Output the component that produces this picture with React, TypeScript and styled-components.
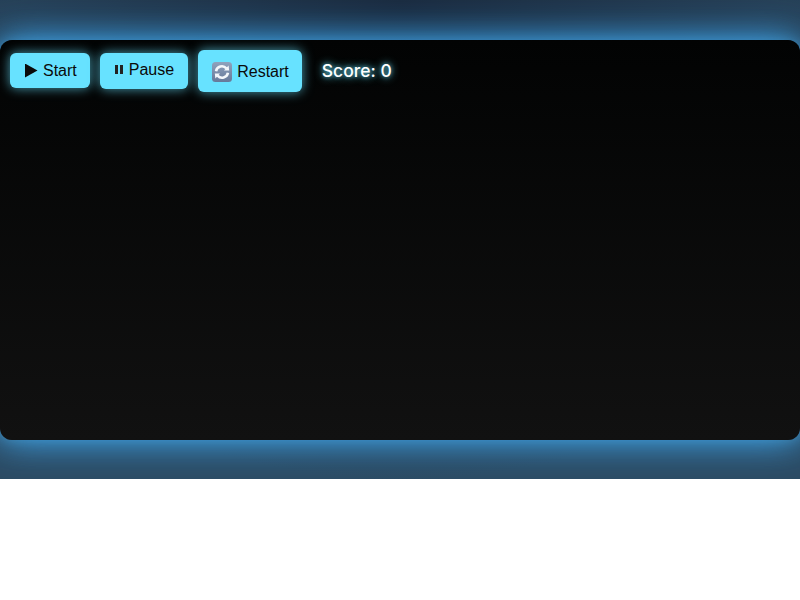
import styled, { createGlobalStyle } from "styled-components";

const GlobalStyle = createGlobalStyle`
  html, body {
    margin: 0;
    padding: 0;
    background: #fff;
  }
`;

const Page = styled.div`
  height: 479px;
  box-sizing: border-box;
  padding-top: 40px;
  overflow: hidden;
  background: radial-gradient(ellipse 560px 480px at 50% 0, #1a2a3e 0%, #2c4a62 100%);
`;

const Board = styled.main`
  height: 400px;
  border-radius: 12px;
  background: linear-gradient(180deg, #020303 0%, #111 100%);
  box-shadow: 0 0 40px #3aa2ec, 0 0 30px rgba(90, 190, 240, 0.3), 0 0 12px rgba(90, 190, 240, 0.3);
`;

const Toolbar = styled.div`
  display: flex;
  align-items: center;
  gap: 10px;
  padding: 10px 0 0 10px;
`;

const Button = styled.button<{ $height: number; $lift?: number; $endPad?: number }>`
  display: inline-flex;
  align-items: center;
  gap: 5px;
  box-sizing: border-box;
  height: ${({ $height }) => $height}px;
  margin-bottom: ${({ $height }) => (36 - $height > 0 ? 36 - $height : 0)}px;
  padding: ${({ $lift = 0 }) => ($lift < 0 ? -$lift : 0)}px ${({ $endPad = 14 }) => $endPad}px
    ${({ $lift = 0 }) => ($lift > 0 ? $lift : 0)}px 14px;
  border: none;
  border-radius: 6px;
  background: #67e2ff;
  color: #0a0a0a;
  font-family: "Liberation Sans", Arial, sans-serif;
  font-size: 16px;
  box-shadow: 0 0 12px rgba(103, 226, 255, 0.7);
`;

const Score = styled.span`
  margin: 0 0 2px 10px;
  color: #fff;
  font-family: Inter, "Liberation Sans", sans-serif;
  font-size: 17.5px;
  font-weight: 500;
  text-shadow: 0 0 8px #67e2ff, 0 0 4px rgba(103, 226, 255, 0.6);
`;

const PlayIcon = () => (
  <svg width="14" height="14" viewBox="0 1 14 14">
    <path d="M1 0.5 L13.5 7.5 L1 14.5 Z" fill="#0a0a0a" />
  </svg>
);

const PauseIcon = () => (
  <svg width="10" height="9" viewBox="0 0 10 9">
    <rect x="1" y="0" width="3" height="9" fill="#222" />
    <rect x="6" y="0" width="3" height="9" fill="#222" />
  </svg>
);

const RestartIcon = () => (
  <svg width="20" height="20" viewBox="0 0 20 20">
    <defs>
      <linearGradient id="tile" x1="0" y1="0" x2="0" y2="1">
        <stop offset="0" stopColor="#8fa2bd" />
        <stop offset="1" stopColor="#66799a" />
      </linearGradient>
    </defs>
    <rect width="20" height="20" rx="3.5" fill="url(#tile)" />
    <path d="M4 9.2 A6 6 0 0 1 14.4 6.4" fill="none" stroke="#f4f7fb" strokeWidth="2.6" />
    <path d="M12 8.4 L17.2 8.4 L16.6 3.4 Z" fill="#f4f7fb" />
    <path d="M16 10.8 A6 6 0 0 1 5.6 13.6" fill="none" stroke="#f4f7fb" strokeWidth="2.6" />
    <path d="M8 11.6 L2.8 11.6 L3.4 16.6 Z" fill="#f4f7fb" />
  </svg>
);

export default function App() {
  return (
    <>
      <GlobalStyle />
      <Page>
        <Board>
          <Toolbar>
            <Button $height={35} $endPad={13}>
              <PlayIcon />
              Start
            </Button>
            <Button $height={36} $lift={3}>
              <PauseIcon />
              Pause
            </Button>
            <Button $height={42} $lift={-2} $endPad={13}>
              <RestartIcon />
              Restart
            </Button>
            <Score>Score: 0</Score>
          </Toolbar>
        </Board>
      </Page>
    </>
  );
}
